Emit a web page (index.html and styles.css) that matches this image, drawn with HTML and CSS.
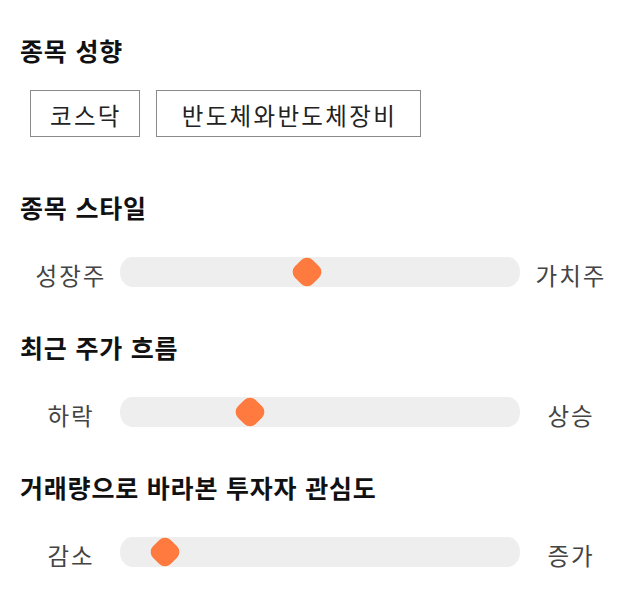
FILE: index.html
```html
<!DOCTYPE html>
<html lang="ko">
<head>
<meta charset="utf-8">
<link rel="stylesheet" href="styles.css">
</head>
<body>
<main class="panel">
  <section class="block">
    <h2 class="title">종목 성향</h2>
    <div class="tags">
      <span class="tag">코스닥</span>
      <span class="tag tag-wide">반도체와반도체장비</span>
    </div>
  </section>
  <section class="block">
    <h2 class="title">종목 스타일</h2>
    <div class="scale">
      <span class="scale-label">성장주</span>
      <div class="track"><span class="thumb" style="left: 46.75%"></span></div>
      <span class="scale-label">가치주</span>
    </div>
  </section>
  <section class="block">
    <h2 class="title">최근 주가 흐름</h2>
    <div class="scale">
      <span class="scale-label">하락</span>
      <div class="track"><span class="thumb" style="left: 32.4%"></span></div>
      <span class="scale-label">상승</span>
    </div>
  </section>
  <section class="block">
    <h2 class="title">거래량으로 바라본 투자자 관심도</h2>
    <div class="scale">
      <span class="scale-label">감소</span>
      <div class="track"><span class="thumb" style="left: 11.25%"></span></div>
      <span class="scale-label">증가</span>
    </div>
  </section>
</main>
</body>
</html>
```

FILE: styles.css
```css
* { box-sizing: border-box; }
html, body { margin: 0; padding: 0; background: #fff; }
body {
  font-family: "Noto Sans CJK KR", "Noto Sans", sans-serif;
  color: #222;
}
.panel {
  width: 640px;
  padding: 32px 20px 0 20px;
  display: flex;
  flex-direction: column;
}
.block {
  display: flex;
  flex-direction: column;
}
.title {
  margin: 0;
  font-size: 25px;
  line-height: 36px;
  font-weight: 700;
  color: #111;
  letter-spacing: 0.8px;
}
.tags {
  display: flex;
  gap: 16px;
  padding: 22px 10px 0 10px;
  margin-bottom: 52px;
}
.tag {
  border: 1px solid #8a8a8a;
  height: 47px;
  padding: 4px 17px 0 19px;
  display: flex;
  align-items: center;
  font-size: 23.5px;
  letter-spacing: 2.3px;
  color: #222;
  line-height: 1;
}
.tag-wide {
  padding-left: 25px;
  padding-right: 23px;
}
.scale {
  display: grid;
  grid-template-columns: 100px 400px 100px;
  align-items: center;
  margin-top: 29px;
  margin-bottom: 39px;
}
.scale-label {
  text-align: center;
  font-size: 23.5px;
  letter-spacing: 2px;
  text-indent: 2px;
  color: #444;
  line-height: 30px;
  padding-top: 6px;
}
.track {
  position: relative;
  height: 30px;
  background: #eeeeee;
  border-radius: 12px / 15px;
}
.thumb {
  position: absolute;
  top: 50%;
  width: 25px;
  height: 25px;
  border-radius: 8px;
  background: #ff7a3e;
  transform: translate(-50%, -50%) rotate(45deg);
}
```
